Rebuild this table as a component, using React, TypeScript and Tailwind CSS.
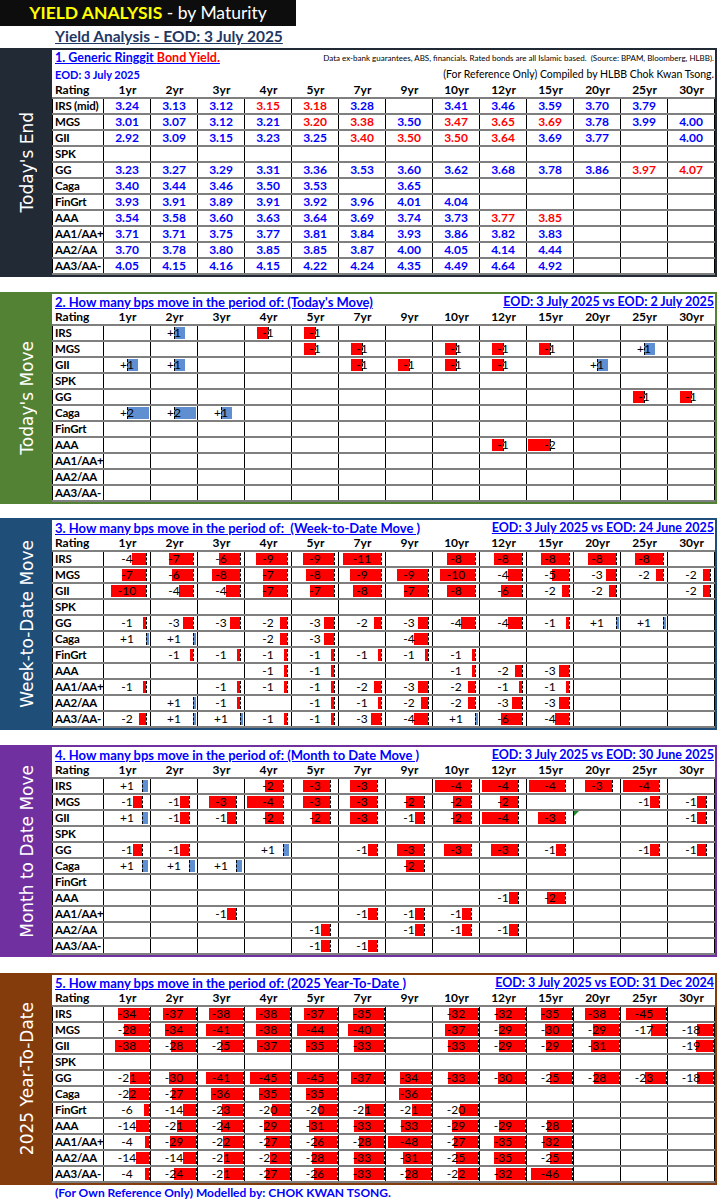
import React from "react";

const COLS = ["1yr", "2yr", "3yr", "4yr", "5yr", "7yr", "9yr", "10yr", "12yr", "15yr", "20yr", "25yr", "30yr"];
const RATINGS = ["IRS", "MGS", "GII", "SPK", "GG", "Caga", "FinGrt", "AAA", "AA1/AA+", "AA2/AA", "AA3/AA-"];

type V = number | null;
const _ = null;

// Table 1: "*" suffix marks a red value
const YIELDS: string[][] = [
  ["3.24", "3.13", "3.12", "3.15*", "3.18*", "3.28", "", "3.41", "3.46", "3.59", "3.70", "3.79", ""],
  ["3.01", "3.07", "3.12", "3.21", "3.20*", "3.38*", "3.50", "3.47*", "3.65*", "3.69*", "3.78", "3.99", "4.00"],
  ["2.92", "3.09", "3.15", "3.23", "3.25", "3.40*", "3.50*", "3.50*", "3.64*", "3.69", "3.77", "", "4.00"],
  ["", "", "", "", "", "", "", "", "", "", "", "", ""],
  ["3.23", "3.27", "3.29", "3.31", "3.36", "3.53", "3.60", "3.62", "3.68", "3.78", "3.86", "3.97*", "4.07*"],
  ["3.40", "3.44", "3.46", "3.50", "3.53", "", "3.65", "", "", "", "", "", ""],
  ["3.93", "3.91", "3.89", "3.91", "3.92", "3.96", "4.01", "4.04", "", "", "", "", ""],
  ["3.54", "3.58", "3.60", "3.63", "3.64", "3.69", "3.74", "3.73", "3.77*", "3.85*", "", "", ""],
  ["3.71", "3.71", "3.75", "3.77", "3.81", "3.84", "3.93", "3.86", "3.82", "3.83", "", "", ""],
  ["3.70", "3.78", "3.80", "3.85", "3.85", "3.87", "4.00", "4.05", "4.14", "4.44", "", "", ""],
  ["4.05", "4.15", "4.16", "4.15", "4.22", "4.24", "4.35", "4.49", "4.64", "4.92", "", "", ""],
];

const TODAY: V[][] = [
  [_, 1, _, -1, -1, _, _, _, _, _, _, _, _],
  [_, _, _, _, -1, -1, _, -1, -1, -1, _, 1, _],
  [1, 1, _, _, _, -1, -1, -1, -1, _, 1, _, _],
  [_, _, _, _, _, _, _, _, _, _, _, _, _],
  [_, _, _, _, _, _, _, _, _, _, _, -1, -1],
  [2, 2, 1, _, _, _, _, _, _, _, _, _, _],
  [_, _, _, _, _, _, _, _, _, _, _, _, _],
  [_, _, _, _, _, _, _, _, -1, -2, _, _, _],
  [_, _, _, _, _, _, _, _, _, _, _, _, _],
  [_, _, _, _, _, _, _, _, _, _, _, _, _],
  [_, _, _, _, _, _, _, _, _, _, _, _, _],
];

const WTD: V[][] = [
  [-4, -7, -6, -9, -9, -11, _, -8, -8, -8, -8, -8, _],
  [-7, -6, -8, -7, -8, -9, -9, -10, -4, -5, -3, -2, -2],
  [-10, -4, -4, -7, -7, -8, -7, -8, -6, -2, -2, _, -2],
  [_, _, _, _, _, _, _, _, _, _, _, _, _],
  [-1, -3, -3, -2, -3, -2, -3, -4, -4, -1, 1, 1, _],
  [1, 1, _, -2, -3, _, -4, _, _, _, _, _, _],
  [_, -1, -1, -1, -1, -1, -1, -1, _, _, _, _, _],
  [_, _, _, -1, -1, _, _, -1, -2, -3, _, _, _],
  [-1, _, -1, -1, -1, -2, -3, -2, -1, -1, _, _, _],
  [_, 1, -1, _, -1, -1, -2, -2, -3, -3, _, _, _],
  [-2, 1, 1, -1, -1, -3, -4, 1, -6, -4, _, _, _],
];

const MTD: V[][] = [
  [1, _, _, -2, -3, -3, _, -4, -4, -4, -3, -4, _],
  [-1, -1, -3, -4, -3, -3, -2, -2, -2, _, _, -1, -1],
  [1, -1, -1, -2, -2, -3, -1, -2, -4, -3, _, _, -1],
  [_, _, _, _, _, _, _, _, _, _, _, _, _],
  [-1, -1, _, 1, _, -1, -3, -3, -3, -1, _, -1, -1],
  [1, 1, 1, _, _, _, -2, _, _, _, _, _, _],
  [_, _, _, _, _, _, _, _, _, _, _, _, _],
  [_, _, _, _, _, _, _, _, -1, -2, _, _, _],
  [_, _, -1, _, _, -1, -1, -1, _, _, _, _, _],
  [_, _, _, _, -1, _, -1, -1, -1, _, _, _, _],
  [_, _, _, _, -1, -1, _, _, _, _, _, _, _],
];

const YTD: V[][] = [
  [-34, -37, -38, -38, -37, -35, _, -32, -32, -35, -38, -45, _],
  [-28, -34, -41, -38, -44, -40, _, -37, -29, -30, -29, -17, -18],
  [-38, -28, -25, -37, -35, -33, _, -33, -29, -29, -31, _, -19],
  [_, _, _, _, _, _, _, _, _, _, _, _, _],
  [-21, -30, -41, -45, -45, -37, -34, -33, -30, -25, -28, -23, -18],
  [-22, -27, -36, -35, -35, _, -36, _, _, _, _, _, _],
  [-6, -14, -23, -20, -20, -21, -21, -20, _, _, _, _, _],
  [-14, -21, -24, -29, -31, -33, -33, -29, -29, -28, _, _, _],
  [-4, -29, -22, -27, -26, -28, -48, -27, -35, -32, _, _, _],
  [-14, -14, -21, -22, -28, -33, -31, -25, -35, -25, _, _, _],
  [-4, -24, -21, -27, -26, -33, -28, -22, -32, -46, _, _, _],
];

type Cfg = { axis: number; neg: number; pos: number };

function BarCell({ v, cfg, flag }: { v: V; cfg: Cfg; flag?: boolean }) {
  return (
    <div className="relative h-full border-r border-black flex items-center justify-center">
      {flag && (
        <svg className="absolute left-0 top-0" width="5" height="5" viewBox="0 0 5 5">
          <polygon points="0,0 5,0 0,5" fill="#1e8a2e" />
        </svg>
      )}
      {v !== null && (
        <>
          {v < 0 ? (
            <div
              className="absolute top-[1px] bottom-[1px] bg-[#ff0000]"
              style={{ left: cfg.axis - -v * cfg.neg, width: -v * cfg.neg }}
            />
          ) : (
            <div
              className="absolute top-[1px] bottom-[1px] bg-[#5f8fd0]"
              style={{ left: cfg.axis, width: v * cfg.pos }}
            />
          )}
          <div
            className="absolute top-[1px] bottom-[1px] border-l border-dashed border-black"
            style={{ left: cfg.axis }}
          />
          <span className="relative text-[12px] leading-none text-black">{v > 0 ? `+${v}` : `${v}`}</span>
        </>
      )}
    </div>
  );
}

function HeaderRow({ first }: { first: string }) {
  return (
    <div className="grid grid-cols-[52px_repeat(13,47px)] h-[16px] border-b-2 border-[#7f7f7f] items-center text-[12px] font-bold leading-none text-black">
      <div className="pl-[3px]">{first}</div>
      {COLS.map((c) => (
        <div key={c} className="text-center">
          {c}
        </div>
      ))}
    </div>
  );
}

function Band({ bg, label }: { bg: string; label: string }) {
  return (
    <div className={`w-[50px] flex items-center justify-center ${bg}`}>
      <span className="[writing-mode:vertical-rl] rotate-180 font-['DejaVu_Sans',sans-serif] text-[17px] leading-none text-white whitespace-nowrap">
        {label}
      </span>
    </div>
  );
}

function RatingCell({ text }: { text: string }) {
  return (
    <div className="h-full border-l border-r border-black flex items-center pl-[2px] text-[11.5px] tracking-[-0.2px] font-bold leading-none text-black whitespace-nowrap overflow-hidden">
      {text}
    </div>
  );
}

function MoveTable({
  title,
  eod,
  label,
  border,
  bg,
  data,
  cfg,
  flagAt,
}: {
  title: string;
  eod: string;
  label: string;
  border: string;
  bg: string;
  data: V[][];
  cfg: Cfg;
  flagAt?: [number, number];
}) {
  return (
    <div className={`w-[717px] flex border-2 ${border}`}>
      <Band bg={bg} label={label} />
      <div className="flex flex-col bg-white">
        <div className="h-[16px] flex items-center justify-between pl-[3px] pr-[1px] font-bold leading-none text-[#0000ff]">
          <span className="underline whitespace-pre text-[13px]">{title}</span>
          <span className="underline text-[12.5px]">{eod}</span>
        </div>
        <HeaderRow first="Rating" />
        {RATINGS.map((r, ri) => (
          <div
            key={r}
            className="grid grid-cols-[52px_repeat(13,47px)] h-[16px] border-b-2 border-[#7f7f7f]"
          >
            <RatingCell text={r} />
            {data[ri].map((v, ci) => (
              <BarCell
                key={ci}
                v={v}
                cfg={cfg}
                flag={flagAt !== undefined && flagAt[0] === ri && flagAt[1] === ci}
              />
            ))}
          </div>
        ))}
      </div>
    </div>
  );
}

function YieldTable() {
  return (
    <div className="w-[717px] flex border-2 border-[#222a35]">
      <Band bg="bg-[#222a35]" label="Today's End" />
      <div className="flex flex-col bg-white">
        <div className="h-[16px] flex items-center justify-between pl-[3px] pr-[1px] leading-none">
          <span className="text-[12.5px] font-bold text-[#0000ff] underline">
            1. Generic Ringgit <span className="text-[#ff0000]">Bond Yield.</span>
          </span>
          <span className="text-[8px] text-black whitespace-nowrap">
            Data ex-bank guarantees, ABS, financials. Rated bonds are all Islamic based.&nbsp; (Source: BPAM, Bloomberg, HLBB).
          </span>
        </div>
        <div className="h-[17px] flex items-center justify-between pl-[3px] pr-[1px] leading-none">
          <span className="text-[11px] font-bold text-[#0000ff]">EOD: 3 July 2025</span>
          <span className="text-[10.5px] text-black">(For Reference Only) Compiled by HLBB Chok Kwan Tsong.</span>
        </div>
        <HeaderRow first="Rating" />
        {RATINGS.map((r, ri) => (
          <div
            key={r}
            className="grid grid-cols-[52px_repeat(13,47px)] h-[16px] border-b-2 border-[#7f7f7f]"
          >
            <RatingCell text={r === "IRS" ? "IRS (mid)" : r} />
            {YIELDS[ri].map((v, ci) => {
              const red = v.endsWith("*");
              const t = red ? v.slice(0, -1) : v;
              return (
                <div
                  key={ci}
                  className={`h-full border-r border-black flex items-center justify-center text-[12px] font-bold leading-none ${
                    red ? "text-[#ff0000]" : "text-[#0000ff]"
                  }`}
                >
                  {t}
                </div>
              );
            })}
          </div>
        ))}
      </div>
    </div>
  );
}

export default function App() {
  return (
    <div className="w-[725px] h-[1200px] bg-white overflow-hidden font-['Lato','Liberation_Sans',sans-serif]">
      <div className="w-[296px] h-[26px] bg-[#0d0d0d] flex items-center justify-center text-[17.5px] leading-none">
        <span className="font-bold text-[#ffff00]">YIELD ANALYSIS</span>
        <span className="text-white">&nbsp;- by Maturity</span>
      </div>
      <div className="h-[22px] flex items-center pl-[55px]">
        <span className="text-[15.5px] font-bold text-[#1f3864] underline leading-none">
          Yield Analysis - EOD: 3 July 2025
        </span>
      </div>
      <YieldTable />
      <div className="mt-[15px]">
        <MoveTable
          title="2. How many bps move in the period of: (Today's Move)"
          eod="EOD: 3 July 2025 vs EOD: 2 July 2025"
          label="Today's Move"
          border="border-[#548235]"
          bg="bg-[#548235]"
          data={TODAY}
          cfg={{ axis: 23, neg: 11, pos: 11 }}
        />
      </div>
      <div className="mt-[14px]">
        <MoveTable
          title="3. How many bps move in the period of:  (Week-to-Date Move )"
          eod="EOD: 3 July 2025 vs EOD: 24 June 2025"
          label="Week-to-Date Move"
          border="border-[#1f4e79]"
          bg="bg-[#1f4e79]"
          data={WTD}
          cfg={{ axis: 42, neg: 3.5, pos: 3 }}
        />
      </div>
      <div className="mt-[15px]">
        <MoveTable
          title="4. How many bps move in the period of: (Month to Date Move )"
          eod="EOD: 3 July 2025 vs EOD: 30 June 2025"
          label="Month to Date Move"
          border="border-[#7030a0]"
          bg="bg-[#7030a0]"
          data={MTD}
          cfg={{ axis: 38, neg: 9, pos: 6 }}
          flagAt={[2, 10]}
        />
      </div>
      <div className="mt-[16px]">
        <MoveTable
          title="5. How many bps move in the period of: (2025 Year-To-Date )"
          eod="EOD: 3 July 2025 vs EOD: 31 Dec 2024"
          label="2025 Year-To-Date"
          border="border-[#843c0c]"
          bg="bg-[#843c0c]"
          data={YTD}
          cfg={{ axis: 45, neg: 0.9, pos: 1 }}
        />
      </div>
      <div className="h-[15px] flex items-center pl-[55px]">
        <span className="text-[12px] font-bold text-[#0000ff] leading-none">
          (For Own Reference Only) Modelled by: CHOK KWAN TSONG.
        </span>
      </div>
    </div>
  );
}
